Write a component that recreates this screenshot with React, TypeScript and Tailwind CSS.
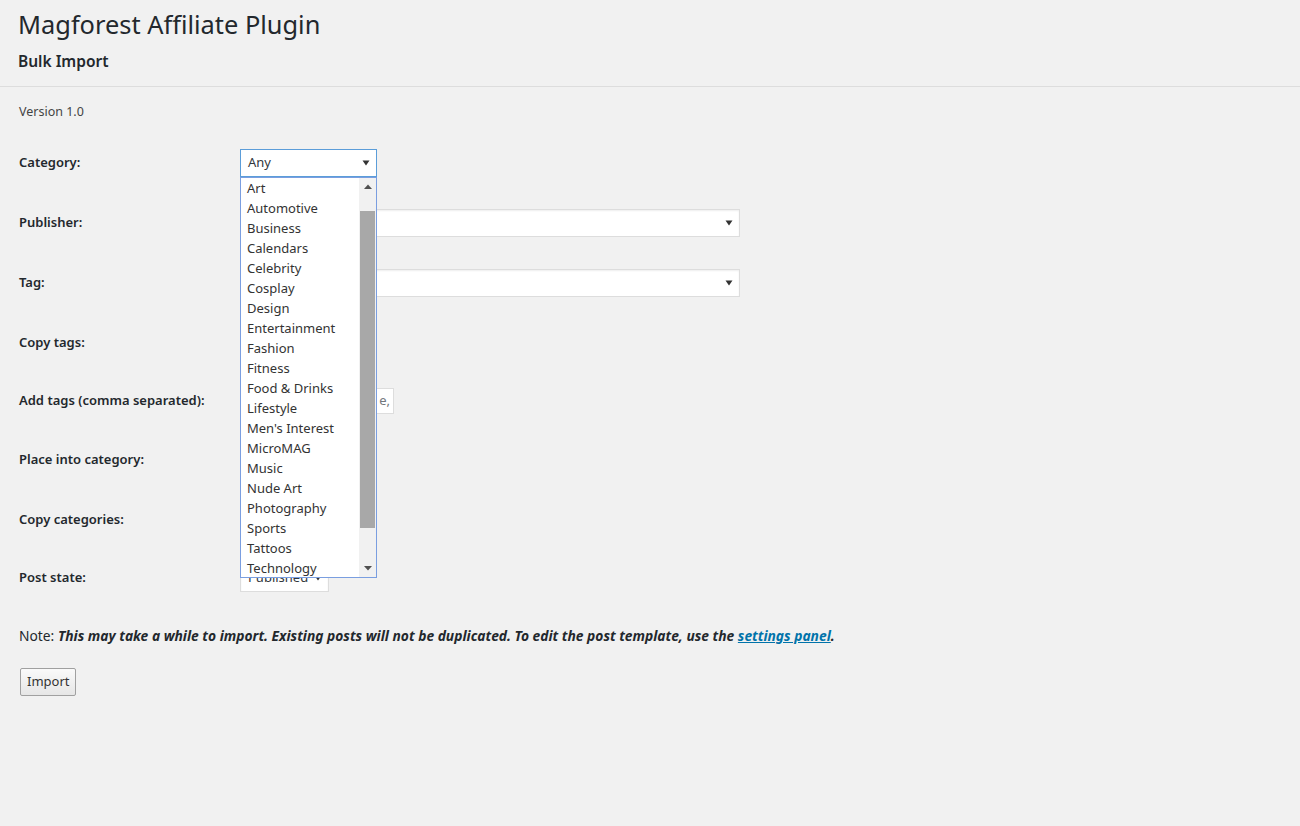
import React from "react";

const categories = [
  "Art","Automotive","Business","Calendars","Celebrity","Cosplay","Design","Entertainment","Fashion","Fitness",
  "Food & Drinks","Lifestyle","Men's Interest","MicroMAG","Music","Nude Art","Photography","Sports","Tattoos","Technology",
];

const Arrow = () => (
  <svg width="8" height="6" viewBox="0 0 8 6">
    <path d="M0.5 0.5 L7.5 0.5 L4 5.5 Z" fill="#333" />
  </svg>
);

function Select({ w, text, focus = false }: { w: string; text: string; focus?: boolean }) {
  return (
    <div
      className={`${w} h-[28px] bg-white flex items-center justify-between pl-[7px] pr-[6px] text-[13px] text-[#32373c] border ${
        focus ? "border-[#5b9dd9]" : "border-[#ddd] shadow-[inset_0_1px_2px_rgba(0,0,0,0.07)]"
      }`}
    >
      <span className="whitespace-nowrap">{text}</span>
      <Arrow />
    </div>
  );
}

function Row({ h, label, children }: { h: string; label: string; children?: React.ReactNode }) {
  return (
    <div className={`flex items-center ${h}`}>
      <div className="w-[221px] text-[13px] font-semibold text-[#23282d]">{label}</div>
      <div className="flex items-center">{children}</div>
    </div>
  );
}

export default function App() {
  return (
    <div
      className="min-h-[826px] w-[1300px] bg-[#f1f1f1] text-[#23282d] relative"
      style={{ fontFamily: '"Noto Sans", "Open Sans", sans-serif' }}
    >
      <div className="pl-[18px] pt-[9px]">
        <h1 className="text-[25.4px] leading-[30px] font-normal text-[#23282d]">Magforest Affiliate Plugin</h1>
        <h2 className="mt-[12px] text-[15.5px] leading-[20px] font-semibold text-[#23282d]">Bulk Import</h2>
      </div>
      <div className="mt-[15px] h-px bg-[#dddddd] w-full" />
      <div className="pl-[19px]">
        <p className="mt-[16px] text-[12.5px] leading-[18px] text-[#444]">Version 1.0</p>
        <div className="mt-[12px]">
          <Row h="h-[60px]" label="Category:">
            <Select w="w-[137px]" text="Any" focus />
          </Row>
          <Row h="h-[60px]" label="Publisher:">
            <Select w="w-[500px]" text="" />
          </Row>
          <Row h="h-[60px]" label="Tag:">
            <Select w="w-[500px]" text="" />
          </Row>
          <Row h="h-[60px]" label="Copy tags:">
            <div className="w-[16px] h-[16px] bg-white border border-[#b4b9be]" />
          </Row>
          <Row h="h-[56px]" label="Add tags (comma separated):">
            <div className="w-[154px] h-[26px] bg-white border border-[#ddd] flex items-center justify-end whitespace-nowrap pr-[3px] text-[13px] text-[#72777c]">
              tag, other, e,
            </div>
          </Row>
          <Row h="h-[62px]" label="Place into category:">
            <Select w="w-[130px]" text="" />
          </Row>
          <Row h="h-[58px]" label="Copy categories:">
            <div className="w-[16px] h-[16px] bg-white border border-[#b4b9be]" />
          </Row>
          <Row h="h-[58px]" label="Post state:">
            <Select w="w-[89px]" text="Published" />
          </Row>
        </div>
        <p className="mt-[19px] text-[13.8px] leading-[20px] text-[#23282d]">
          Note:{" "}
          <b className="italic font-bold">
            This may take a while to import. Existing posts will not be duplicated. To edit the post template, use the{" "}
            <a className="text-[#0073aa] underline">settings panel</a>.
          </b>
        </p>
        <button className="mt-[22px] ml-[1px] h-[28px] px-[6px] text-[13px] text-[#333] border border-[#a0a0a0] rounded-[2px] bg-gradient-to-b from-[#fafafa] to-[#e6e6e6]">
          Import
        </button>
      </div>

      {/* open dropdown list */}
      <div className="absolute left-[240px] top-[177px] w-[137px] h-[401px] bg-white border border-[#7a9ee0] flex">
        <div className="flex-1 pl-[6px]">
          {categories.map((c) => (
            <div key={c} className="h-[20px] leading-[20px] text-[13px] text-[#333] whitespace-nowrap">
              {c}
            </div>
          ))}
        </div>
        <div className="w-[17px] bg-[#f1f1f1] flex flex-col items-center">
          <div className="h-[17px] flex items-center justify-center">
            <svg width="8" height="5" viewBox="0 0 8 5"><path d="M0 5 L4 0.5 L8 5 Z" fill="#505050" /></svg>
          </div>
          <div className="mt-[16px] w-[15px] h-[317px] bg-[#a8a8a8]" />
          <div className="flex-1" />
          <div className="h-[17px] flex items-center justify-center">
            <svg width="8" height="5" viewBox="0 0 8 5"><path d="M0 0 L8 0 L4 4.5 Z" fill="#505050" /></svg>
          </div>
        </div>
      </div>
    </div>
  );
}
